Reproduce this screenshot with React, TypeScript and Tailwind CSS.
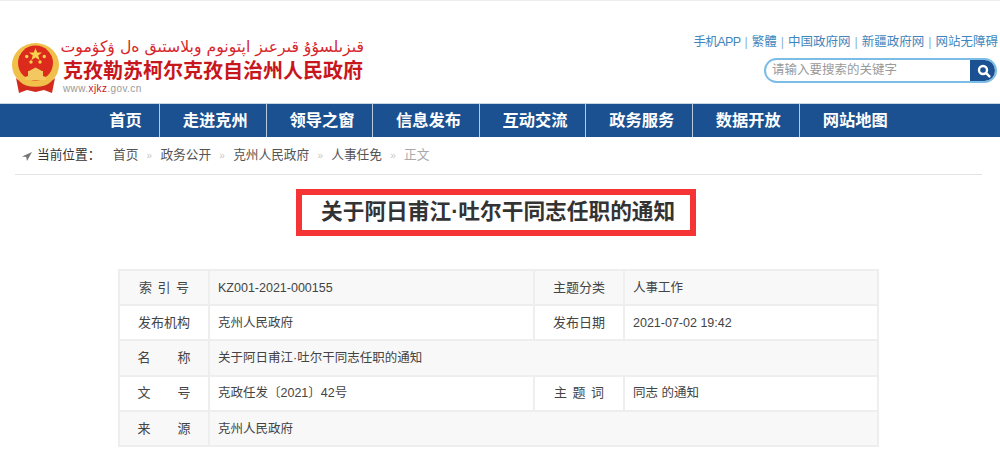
const CJK = "font-['Liberation_Sans','Noto_Sans_CJK_SC',sans-serif]";

function Emblem() {
  return (
    <svg width="48" height="50" viewBox="0 0 48 50" className="shrink-0">
      <ellipse cx="23.5" cy="22" rx="23.5" ry="22" fill="#f0c04a" />
      <circle cx="23.5" cy="20" r="17.5" fill="#dc2a1c" />
      <polygon points="23.5,5 25.2,9.6 30,9.6 26.2,12.6 27.6,17 23.5,14.4 19.4,17 20.8,12.6 17,9.6 21.8,9.6" fill="#f7d24e" />
      <circle cx="14.7" cy="13.5" r="1.7" fill="#f7d24e" />
      <circle cx="32.3" cy="13.5" r="1.7" fill="#f7d24e" />
      <circle cx="19" cy="19" r="1.7" fill="#f7d24e" />
      <circle cx="28" cy="19" r="1.7" fill="#f7d24e" />
      <path d="M13 37v-3l3-1v-5h15v5l3 1v3z" fill="#f3c860" />
      <path d="M17 28l6.5-3.5L30 28z" fill="#f3c860" />
      <path d="M4 35c5 5 12 7 19.5 7S38 40 43 35l-3 15-8-3-8.5 2-8.5-2-8 3z" fill="#d32a1e" />
      <path d="M8 37c4 4 10 5.500 15.500 5.500S35 41 39 37" fill="none" stroke="#f0c04a" strokeWidth="2.500" />
    </svg>
  );
}

const navItems = ["首页", "走进克州", "领导之窗", "信息发布", "互动交流", "政务服务", "数据开放", "网站地图"];
const topLinks = ["手机APP", "繁體", "中国政府网", "新疆政府网", "网站无障碍"];
const crumbs = ["首页", "政务公开", "克州人民政府", "人事任免"];

function Label({ chars, wide }: { chars: string[]; wide?: boolean }) {
  return (
    <div className={`flex w-[90px] shrink-0 items-center justify-center border-r-2 border-[#eeeeee] text-[13px] ${wide ? "gap-[27px]" : chars.length === 3 ? "gap-[5.5px]" : ""}`}>
      {chars.map((c, i) => (
        <span key={i}>{c}</span>
      ))}
    </div>
  );
}

function Row({
  label,
  value,
  label2,
  value2,
  alt,
  wide,
  last,
}: {
  label: string[];
  value: string;
  label2?: string[];
  value2?: string;
  alt?: boolean;
  wide?: boolean;
  last?: boolean;
}) {
  return (
    <div className={`flex ${last ? "h-[33.5px]" : "h-[35.2px] border-b-2 border-[#eeeeee]"} ${alt ? "bg-[#f8f8f8]" : "bg-white"}`}>
      <Label chars={label} wide={wide} />
      <div className={`flex items-center pl-[8px] pt-[1px] ${label2 ? "w-[325px] shrink-0 border-r-2 border-[#eeeeee]" : "flex-1"}`}>{value}</div>
      {label2 && <Label chars={label2} />}
      {label2 && <div className="flex flex-1 items-center pl-[8px] pt-[1px]">{value2}</div>}
    </div>
  );
}

export default function App() {
  return (
    <div className={`h-[460px] w-[1000px] overflow-hidden bg-white ${CJK}`}>
      <header className="flex h-[103px] justify-between border-t border-[#eeeeee] pl-[12px] pr-[2px]">
        <div className="flex items-start pt-[42px]">
          <Emblem />
          <div className="-mt-[5px] flex w-[304px] flex-col pl-[3px]">
            <div dir="rtl" className="h-[21px] whitespace-nowrap text-right font-['DejaVu_Sans',sans-serif] text-[15.7px] leading-[18px] text-[#d8262c]">
              قىزىلسۇۇ قىرعىز اپتونوم وبلاستىق ەل ۋكۋموت
            </div>
            <div className="whitespace-nowrap text-[20px] font-bold leading-[24px] text-[#c8161d]">克孜勒苏柯尔克孜自治州人民政府</div>
            <div className="text-[10px] leading-[12px] tracking-[0.4px] text-[#999999]">
              www.<span className="text-[#c8161d]">xjkz</span>.gov.cn
            </div>
          </div>
        </div>
        <div className="flex flex-col items-end pt-[33px]">
          <div className="flex h-[16px] items-center whitespace-nowrap text-[12.5px] text-[#3f86bd]">
            {topLinks.map((t, i) => (
              <span key={t} className={`flex items-center ${i === 0 ? "tracking-[-0.6px]" : ""}`}>
                {i > 0 && <span className="px-[4px] text-[#8db4d3]">|</span>}
                {t}
              </span>
            ))}
          </div>
          <div className="mr-[1px] mt-[8px] flex h-[25px] w-[233px] overflow-hidden rounded-full border-2 border-[#7cbde8]">
            <div className="flex flex-1 items-center pl-[6px] text-[12.5px] text-[#9a9a9a]">请输入要搜索的关键字</div>
            <div className="-my-[2px] -mr-[2px] flex w-[27px] items-center justify-center bg-[#1b5190]">
              <svg width="14" height="14" viewBox="0 0 14 14" fill="none" stroke="white" strokeWidth="2.4" strokeLinecap="round">
                <circle cx="6" cy="6" r="4" />
                <path d="M9.2 9.2L12.4 12.4" />
              </svg>
            </div>
          </div>
        </div>
      </header>

      <nav className="flex h-[34px] justify-start border-t border-[#c9d6e4] bg-[#1b5190] pl-[91px] text-[16.25px] font-bold text-white">
        {navItems.map((t, i) => (
          <div key={t} className={`flex h-full items-center justify-center ${i < 7 ? "border-r border-[#b9cadc]" : ""} ${i === 0 ? "w-[69px] pl-[1px]" : "w-[106.6px] pl-[5px]"}`}>
            {t}
          </div>
        ))}
      </nav>

      <div className="mx-[15px] flex h-[38px] w-[967px] items-center border-b border-[#e3e3e3] pl-[7px] text-[12.7px] text-[#555555]">
        <svg width="10" height="10" viewBox="0 0 10 10" className="mr-[5px] mt-[1px]">
          <path d="M10 1L0 5.5l4.2.6L5 10z" fill="#777777" />
        </svg>
        <span className="w-[76px] text-[#333333]">当前位置：</span>
        {crumbs.map((c) => (
          <span key={c} className="flex items-center">
            {c}
            <span className="w-[22px] text-center text-[10px] text-[#c8c8c8]">»</span>
          </span>
        ))}
        <span className="text-[#aaaaaa]">正文</span>
      </div>

      <div className="flex justify-center pr-[8px] pt-[14px]">
        <h1 className="flex h-[47px] w-[400px] items-center justify-start whitespace-nowrap border-[6px] border-[#f53535] pl-[19px] text-[21.7px] font-bold text-[#333333]">
          关于阿日甫江·吐尔干同志任职的通知
        </h1>
      </div>

      <div className="ml-[118px] mt-[33px] w-[761px] border-2 border-[#eeeeee] text-[12.5px] text-[#444444]">
        <Row alt label={["索", "引", "号"]} value="KZ001-2021-000155" label2={["主题分类"]} value2="人事工作" />
        <Row label={["发布机构"]} value="克州人民政府" label2={["发布日期"]} value2="2021-07-02 19:42" />
        <Row alt wide label={["名", "称"]} value="关于阿日甫江·吐尔干同志任职的通知" />
        <Row wide label={["文", "号"]} value="克政任发〔2021〕42号" label2={["主", "题", "词"]} value2="同志 的通知" />
        <Row alt wide last label={["来", "源"]} value="克州人民政府" />
      </div>
    </div>
  );
}
